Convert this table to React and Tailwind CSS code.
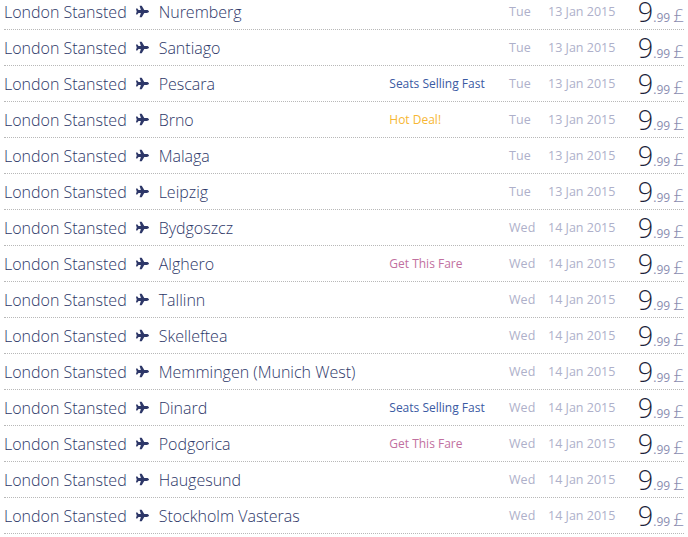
import React from 'react';
import { FaPlane } from 'react-icons/fa';

const flights = [
  { to: 'Nuremberg', day: 'Tue', date: '13 Jan 2015' },
  { to: 'Santiago', day: 'Tue', date: '13 Jan 2015' },
  { to: 'Pescara', tag: 'seats', day: 'Tue', date: '13 Jan 2015' },
  { to: 'Brno', tag: 'hot', day: 'Tue', date: '13 Jan 2015' },
  { to: 'Malaga', day: 'Tue', date: '13 Jan 2015' },
  { to: 'Leipzig', day: 'Tue', date: '13 Jan 2015' },
  { to: 'Bydgoszcz', day: 'Wed', date: '14 Jan 2015' },
  { to: 'Alghero', tag: 'fare', day: 'Wed', date: '14 Jan 2015' },
  { to: 'Tallinn', day: 'Wed', date: '14 Jan 2015' },
  { to: 'Skelleftea', day: 'Wed', date: '14 Jan 2015' },
  { to: 'Memmingen (Munich West)', day: 'Wed', date: '14 Jan 2015' },
  { to: 'Dinard', tag: 'seats', day: 'Wed', date: '14 Jan 2015' },
  { to: 'Podgorica', tag: 'fare', day: 'Wed', date: '14 Jan 2015' },
  { to: 'Haugesund', day: 'Wed', date: '14 Jan 2015' },
  { to: 'Stockholm Vasteras', day: 'Wed', date: '14 Jan 2015' },
];

const tags = {
  seats: { label: 'Seats Selling Fast', cls: 'text-[#3b5aa3]' },
  hot: { label: 'Hot Deal!', cls: 'text-[#f7b733]' },
  fare: { label: 'Get This Fare', cls: 'text-[#c170a0]' },
};

export default function App() {
  return (
    <div className="bg-white h-[537px] overflow-hidden font-['Open_Sans',sans-serif] font-light">
      <div className="-mt-[6px] ml-[4px] w-[680px]">
        {flights.map((f, i) => {
          const tag = f.tag ? tags[f.tag] : null;
          return (
            <div
              key={i}
              className="flex items-center h-[36px] border-b border-dotted border-[#b8b8b8]"
            >
              <div className="w-[386px] flex items-center text-[16px] text-[#2d3768] whitespace-nowrap">
                <span>London Stansted</span>
                <FaPlane className="ml-[9px] mr-[10px] w-[13px] h-[13px] text-[#2d3768]" />
                <span>{f.to}</span>
              </div>
              <div className={`w-[120px] pt-[1px] text-[12px] font-normal ${tag ? tag.cls : ''}`}>
                {tag ? tag.label : ''}
              </div>
              <div className="w-[39px] pt-[2px] text-[12.5px] font-normal text-[#aeb0ca]">{f.day}</div>
              <div className="w-[90px] pt-[2px] text-[12.5px] font-normal text-[#aeb0ca]">{f.date}</div>
              <div className="flex items-baseline whitespace-nowrap pt-[1px]">
                <span className="text-[27px] font-light text-[#1c1f3a] leading-none">9</span>
                <span className="text-[12px] font-normal text-[#8a8db0]">.99</span>
                <span className="ml-[3px] text-[19px] font-light text-[#8a8db0] leading-none">£</span>
              </div>
            </div>
          );
        })}
      </div>
    </div>
  );
}
